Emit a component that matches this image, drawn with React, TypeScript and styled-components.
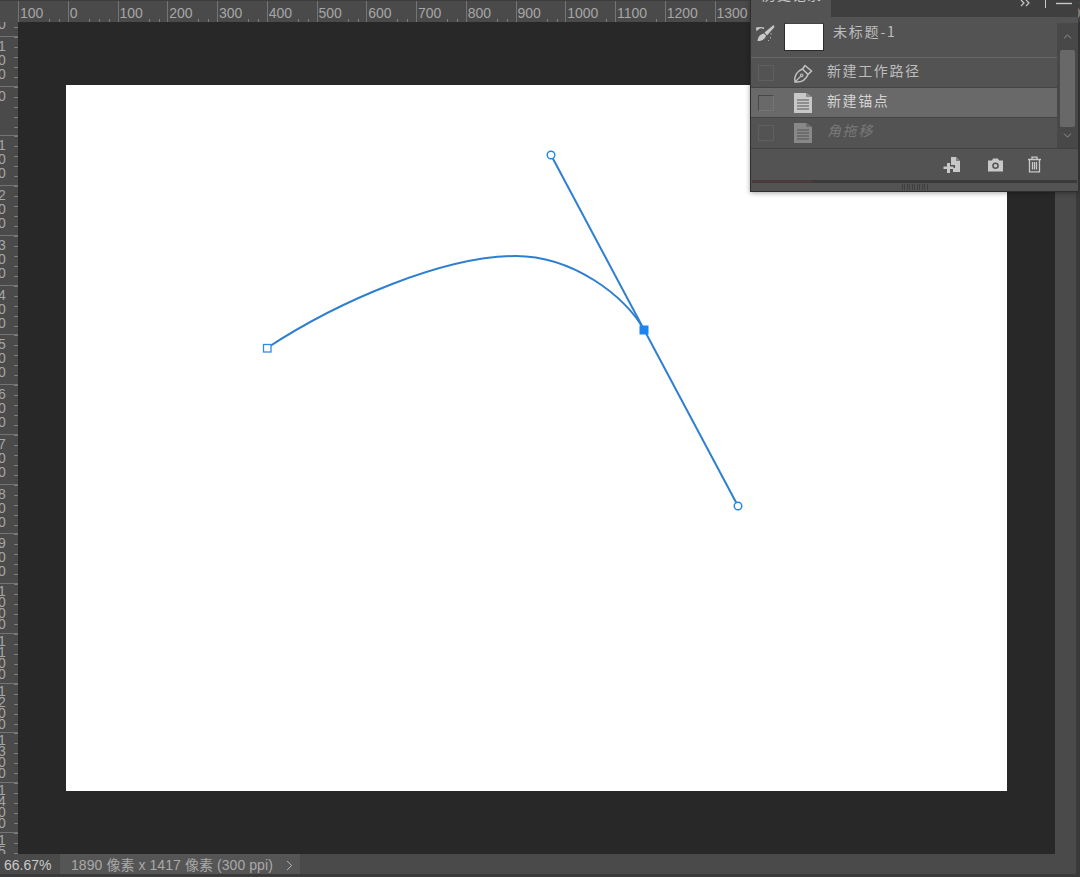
import React from "react";
import styled, { createGlobalStyle } from "styled-components";
import { ChevronDown, ChevronRight, ChevronUp } from "lucide-react";

const GlobalStyle = createGlobalStyle`
  html, body {
    margin: 0;
    padding: 0;
    background: #282828;
    overflow: hidden;
  }
`;

const UI_FONT = `"Liberation Sans", "Noto Sans CJK SC", sans-serif`;
const CJK_FONT = `"Noto Sans CJK SC", "Liberation Sans", sans-serif`;

const Frame = styled.div`
  position: relative;
  display: grid;
  grid-template-columns: 18px 1037px 21px 4px;
  grid-template-rows: 22px 832px 20px 3px;
  width: 1080px;
  height: 877px;
  overflow: hidden;
  background: #282828;
  font-family: ${UI_FONT};
`;

const Corner = styled.div`
  background: #4b4b4b;
  border-top: 1px solid #3d3d3d;
  box-sizing: border-box;
`;

const TopRuler = styled.div`
  grid-column: 2 / 5;
  display: flex;
  overflow: hidden;
  background: #4a4a4a;
  border-top: 1px solid #3d3d3d;
  box-sizing: border-box;
`;

const TopCell = styled.div`
  flex: 0 0 49.75px;
  box-sizing: border-box;
  height: 21px;
  border-left: 1px solid #747474;
  background: repeating-linear-gradient(90deg, #7c7c7c 0 1px, transparent 1px 9.95px) 0 bottom / 100% 3px no-repeat;
`;

const TopLabel = styled.span`
  display: inline-block;
  height: 21px;
  padding: 0 3px 0 1px;
  background: #4a4a4a;
  color: #a6a6a6;
  font-size: 14px;
  line-height: 25px;
`;

const LeftRuler = styled.div`
  display: flex;
  flex-direction: column;
  overflow: hidden;
  background: #4a4a4a;
`;

const LeftCell = styled.div<{ $first?: boolean }>`
  flex: 0 0 49.75px;
  box-sizing: border-box;
  margin-top: ${(p) => (p.$first ? "-36px" : "0")};
  padding-top: 2px;
  overflow: hidden;
  border-top: 1px solid #747474;
  background: repeating-linear-gradient(180deg, #7c7c7c 0 1px, transparent 1px 9.95px) right 0 / 4px 100% no-repeat;
`;

const Digit = styled.span<{ $tight: boolean }>`
  display: block;
  margin-left: -2px;
  color: #a6a6a6;
  font-size: 14px;
  line-height: ${(p) => (p.$tight ? "11px" : "14px")};
`;

const Workspace = styled.main`
  padding: 63px 48px 0;
  background: #282828;
`;

const Canvas = styled.div`
  width: 941px;
  height: 706px;
  background: #ffffff;
`;

const Drawing = styled.svg`
  display: block;
  width: 100%;
  height: 100%;
`;

const ScrollRail = styled.div`
  background: #4a4a4a;
`;

const RightEdge = styled.div`
  grid-column: 4;
  grid-row: 2 / 5;
  background: #3a3a3a;
`;

const StatusBar = styled.footer`
  grid-column: 1 / 4;
  display: flex;
  align-items: stretch;
  background: #4a4a4a;
  font-size: 14px;
  line-height: 22px;
`;

const ZoomValue = styled.div`
  flex: 0 0 60px;
  box-sizing: border-box;
  padding-left: 4px;
  color: #c9c9c9;
`;

const DocInfo = styled.div`
  flex: 0 0 240px;
  box-sizing: border-box;
  display: flex;
  align-items: center;
  justify-content: space-between;
  padding: 2px 2px 0 11px;
  background: #555555;
  color: #a9a9a9;
  letter-spacing: 0.07px;
  white-space: nowrap;
`;

const BottomStrip = styled.div`
  grid-column: 1 / 4;
  background: #3a3a3a;
`;

/* floating history panel, sits over the ruler and the canvas */
const Panel = styled.aside`
  position: absolute;
  top: 0;
  left: 750px;
  width: 328px;
  height: 192px;
  box-sizing: border-box;
  display: flex;
  flex-direction: column;
  border-left: 1px solid #2e2e2e;
  border-bottom: 1px solid #2e2e2e;
  background: #535353;
  box-shadow: 0 1px 5px rgba(0, 0, 0, 0.35);
  font-family: ${CJK_FONT};
  font-size: 14px;
`;

const TabBar = styled.div`
  flex: 0 0 17px;
  display: flex;
  overflow: hidden;
  background: #3f3f3f;
`;

const Tab = styled.div`
  flex: 0 0 80px;
  box-sizing: border-box;
  height: 17px;
  padding-left: 11px;
  overflow: hidden;
  background: #535353;
  color: #c4c4c4;
  letter-spacing: 1px;
  line-height: 20px;
`;

const TabText = styled.span`
  display: block;
  margin-top: -16px;
`;

const TabTools = styled.div`
  flex: 1;
  display: flex;
  align-items: flex-start;
  justify-content: flex-end;
  padding-right: 6px;
`;

const PanelBody = styled.div`
  flex: 0 0 131px;
  display: flex;
`;

const List = styled.div`
  flex: 1;
  min-width: 0;
`;

const SnapshotRow = styled.div`
  height: 41px;
  display: flex;
  align-items: flex-start;
  padding: 6px 0 0 4px;
  box-sizing: border-box;
  border-bottom: 1px solid #686868;
  color: #bdbdbd;
`;

const BrushIcon = styled.svg`
  flex: 0 0 20px;
  height: 20px;
  margin: 1px 9px 0 0;
`;

const Thumb = styled.div`
  flex: 0 0 40px;
  box-sizing: border-box;
  height: 28px;
  margin-right: 9px;
  border: 1px solid #2c2c2c;
  border-top-color: #444444;
  background: #ffffff;
`;

const SnapshotName = styled.span`
  margin-top: -1px;
  letter-spacing: 1.8px;
  line-height: 18px;
`;

const Row = styled.div<{ $selected?: boolean; $dim?: boolean }>`
  height: 30px;
  box-sizing: border-box;
  display: flex;
  align-items: center;
  padding-left: 7px;
  border-bottom: ${(p) => (p.$dim ? "0" : "1px solid #444444")};
  background: ${(p) => (p.$selected ? "#696969" : "transparent")};
  color: ${(p) => (p.$dim ? "#787878" : p.$selected ? "#d4d4d4" : "#bdbdbd")};
  font-style: ${(p) => (p.$dim ? "italic" : "normal")};
  letter-spacing: 1.6px;
`;

const Check = styled.span<{ $selected?: boolean }>`
  flex: 0 0 16px;
  height: 16px;
  box-sizing: border-box;
  margin-right: 19px;
  border: 1px solid ${(p) => (p.$selected ? "#757575" : "#5f5f5f")};
  border-top-color: ${(p) => (p.$selected ? "#474747" : "#5f5f5f")};
  border-left-color: ${(p) => (p.$selected ? "#474747" : "#5f5f5f")};
`;

const RowIcon = styled.svg<{ $dim?: boolean }>`
  flex: 0 0 20px;
  height: 22px;
  margin-right: 14px;
  opacity: ${(p) => (p.$dim ? 0.45 : 1)};
`;

const RowLabel = styled.span`
  line-height: 20px;
  position: relative;
  top: -3px;
`;

const Scroller = styled.div`
  flex: 0 0 21px;
  box-sizing: border-box;
  margin-top: 6px;
  padding-bottom: 4px;
  display: flex;
  flex-direction: column;
  align-items: center;
  background: #484848;
  color: #9a9a9a;
`;

const ScrollArrow = styled.div<{ $end?: boolean }>`
  flex: ${(p) => (p.$end ? "1" : "0 0 27px")};
  display: flex;
  align-items: center;
  justify-content: center;
`;

const ScrollThumb = styled.div`
  flex: 0 0 77px;
  width: 15px;
  border-radius: 2px;
  background: #686868;
`;

const PanelFooter = styled.div`
  flex: 0 0 32px;
  box-sizing: border-box;
  display: flex;
  align-items: center;
  justify-content: flex-end;
  gap: 23px;
  padding: 0 36px 0 0;
  border-top: 1px solid #404040;
  color: #c8c8c8;
`;

const NewSnapshotIcon = styled.svg`
  margin-right: 3px;
`;

const ProgressTrack = styled.div`
  flex: 0 0 3px;
  margin: 0 1px;
  background: #3a3a3a;
`;

const ProgressFill = styled.div`
  width: 60px;
  height: 100%;
  background: #4a3b3b;
`;

const Grip = styled.div`
  flex: 1;
  display: flex;
  align-items: center;
  justify-content: center;
`;

const GripMarks = styled.div`
  width: 26px;
  height: 6px;
  background: repeating-linear-gradient(90deg, #3f3f3f 0 1px, transparent 1px 2.5px);
`;

const TOP_LABELS = [100, 0, 100, 200, 300, 400, 500, 600, 700, 800, 900, 1000, 1100, 1200, 1300, 1400, 1500, 1600, 1700, 1800, 1900, 2000, 2100];
const LEFT_LABELS = [200, 100, 0, 100, 200, 300, 400, 500, 600, 700, 800, 900, 1000, 1100, 1200, 1300, 1400, 1500];

const PenGlyph = () => (
  <RowIcon viewBox="0 0 20 22" fill="none" stroke="#c4c4c4" strokeWidth="1.5">
    <path d="M2 20C1 14 4 9 9.500 7L15 12.500C13 17.500 8 20.500 2 20Z" />
    <path d="M9.500 7L12 3.500L18.500 9L15 12.500" />
    <path d="M2 20L7.500 14.500" strokeWidth="1.100" />
    <circle cx="8.700" cy="13.300" r="1.300" strokeWidth="1.100" />
  </RowIcon>
);

const DocGlyph = ({ dim }: { dim?: boolean }) => (
  <RowIcon $dim={dim} viewBox="0 0 20 22">
    <path d="M1 1H13L19 5V21H1Z" fill="#c8c8c8" />
    <path d="M13 1V5H19Z" fill="#8c8c8c" />
    <path d="M4 8H16M4 11H16M4 14H16M4 17H16" stroke="#555555" strokeWidth="1.200" />
  </RowIcon>
);

const App = () => {
  return (
    <Frame>
      <GlobalStyle />
      <Corner />
      <TopRuler>
        {TOP_LABELS.map((label, i) => (
          <TopCell key={i}>
            <TopLabel>{label}</TopLabel>
          </TopCell>
        ))}
      </TopRuler>

      <LeftRuler>
        {LEFT_LABELS.map((label, i) => {
          const digits = String(label).split("");
          return (
            <LeftCell key={i} $first={i === 0}>
              {digits.map((d, j) => (
                <Digit key={j} $tight={digits.length > 3}>
                  {d}
                </Digit>
              ))}
            </LeftCell>
          );
        })}
      </LeftRuler>

      <Workspace>
        <Canvas>
          <Drawing viewBox="66 85 941 706">
            <g fill="none" stroke="#2e7fcf" strokeWidth="2">
              <path d="M267 348C340 300 445 256 516 256C572 256 626 296 644 330" />
              <path d="M551 155L738 506" />
            </g>
            <circle cx="551" cy="155" r="3.800" fill="#fff" stroke="#1f86ea" strokeWidth="1.400" />
            <circle cx="738" cy="506" r="3.800" fill="#fff" stroke="#1f86ea" strokeWidth="1.400" />
            <rect x="263.500" y="344.500" width="7.500" height="7.500" fill="#fff" stroke="#2f8ae8" strokeWidth="1.300" />
            <rect x="639.500" y="325.500" width="9" height="9" fill="#1b86f2" />
          </Drawing>
        </Canvas>
      </Workspace>

      <ScrollRail />
      <RightEdge />

      <StatusBar>
        <ZoomValue>66.67%</ZoomValue>
        <DocInfo>
          <span>1890 像素 x 1417 像素 (300 ppi)</span>
          <ChevronRight size={17} strokeWidth={1.3} color="#c0c0c0" />
        </DocInfo>
      </StatusBar>
      <BottomStrip />

      <Panel>
        <TabBar>
          <Tab>
            <TabText>历史记录</TabText>
          </Tab>
          <TabTools>
            <svg width="60" height="10" viewBox="0 0 60 10" fill="none" stroke="#c8c8c8">
              <path d="M9 0L12 3L9 6M14 0L17 3L14 6" strokeWidth="1.200" />
              <path d="M33.500 0V8" />
              <path d="M44 3.500H60" strokeWidth="1.400" />
            </svg>
          </TabTools>
        </TabBar>

        <PanelBody>
          <List>
            <SnapshotRow>
              <BrushIcon viewBox="0 0 20 20">
                <path d="M18.500 1L9.500 8.500L12 11.500L19.500 3Z" fill="#c8c8c8" />
                <path d="M9 9.500C6 10 3 12 2.500 17C6 17.500 10.500 15 11 11.500Z" fill="#c8c8c8" />
                <path d="M9 4.500C6 3 4 3.500 2.500 5.500" fill="none" stroke="#c8c8c8" strokeWidth="1.400" />
                <path d="M1 3.500L5 3L1.500 7.500Z" fill="#c8c8c8" />
                <path d="M16 9V10.500M15.500 13V14.500M13.500 16V17" stroke="#b0b0b0" strokeWidth="1" />
              </BrushIcon>
              <Thumb />
              <SnapshotName>未标题-1</SnapshotName>
            </SnapshotRow>

            <Row>
              <Check />
              <PenGlyph />
              <RowLabel>新建工作路径</RowLabel>
            </Row>
            <Row $selected>
              <Check $selected />
              <DocGlyph />
              <RowLabel>新建锚点</RowLabel>
            </Row>
            <Row $dim>
              <Check />
              <DocGlyph dim />
              <RowLabel>角拖移</RowLabel>
            </Row>
          </List>

          <Scroller>
            <ScrollArrow>
              <ChevronUp size={13} strokeWidth={1.6} />
            </ScrollArrow>
            <ScrollThumb />
            <ScrollArrow $end>
              <ChevronDown size={13} strokeWidth={1.6} />
            </ScrollArrow>
          </Scroller>
        </PanelBody>

        <PanelFooter>
          <NewSnapshotIcon width="18" height="18" viewBox="0 0 18 18" fill="currentColor">
            <path d="M8 1H13L17 5V16H10V12H12V9H8Z" />
            <path d="M13 1V5H17Z" fill="#7d7d7d" />
            <path d="M4 7H7V10.500H10.500V13H7V17H4V13H0.500V10.500H4Z" />
          </NewSnapshotIcon>
          <svg width="17" height="14" viewBox="0 0 17 14" fill="currentColor">
            <path fillRule="evenodd" d="M1 2.500H5L6 0.500H11L12 2.500H16V13.500H1ZM8.500 4.500A3.300 3.300 0 1 0 8.500 11.100A3.300 3.300 0 1 0 8.500 4.500ZM8.500 6A1.800 1.800 0 1 1 8.500 9.600A1.800 1.800 0 1 1 8.500 6Z" />
          </svg>
          <svg width="15" height="17" viewBox="0 0 15 17" fill="none" stroke="currentColor" strokeWidth="1.300">
            <path d="M1 3.500H14M5 3.500V1.200H10V3.500M2.500 3.500V15.800H12.500V3.500" />
            <path d="M5.500 6V13.500M7.500 6V13.500M9.500 6V13.500" />
          </svg>
        </PanelFooter>

        <ProgressTrack>
          <ProgressFill />
        </ProgressTrack>
        <Grip>
          <GripMarks />
        </Grip>
      </Panel>
    </Frame>
  );
};

export default App;
